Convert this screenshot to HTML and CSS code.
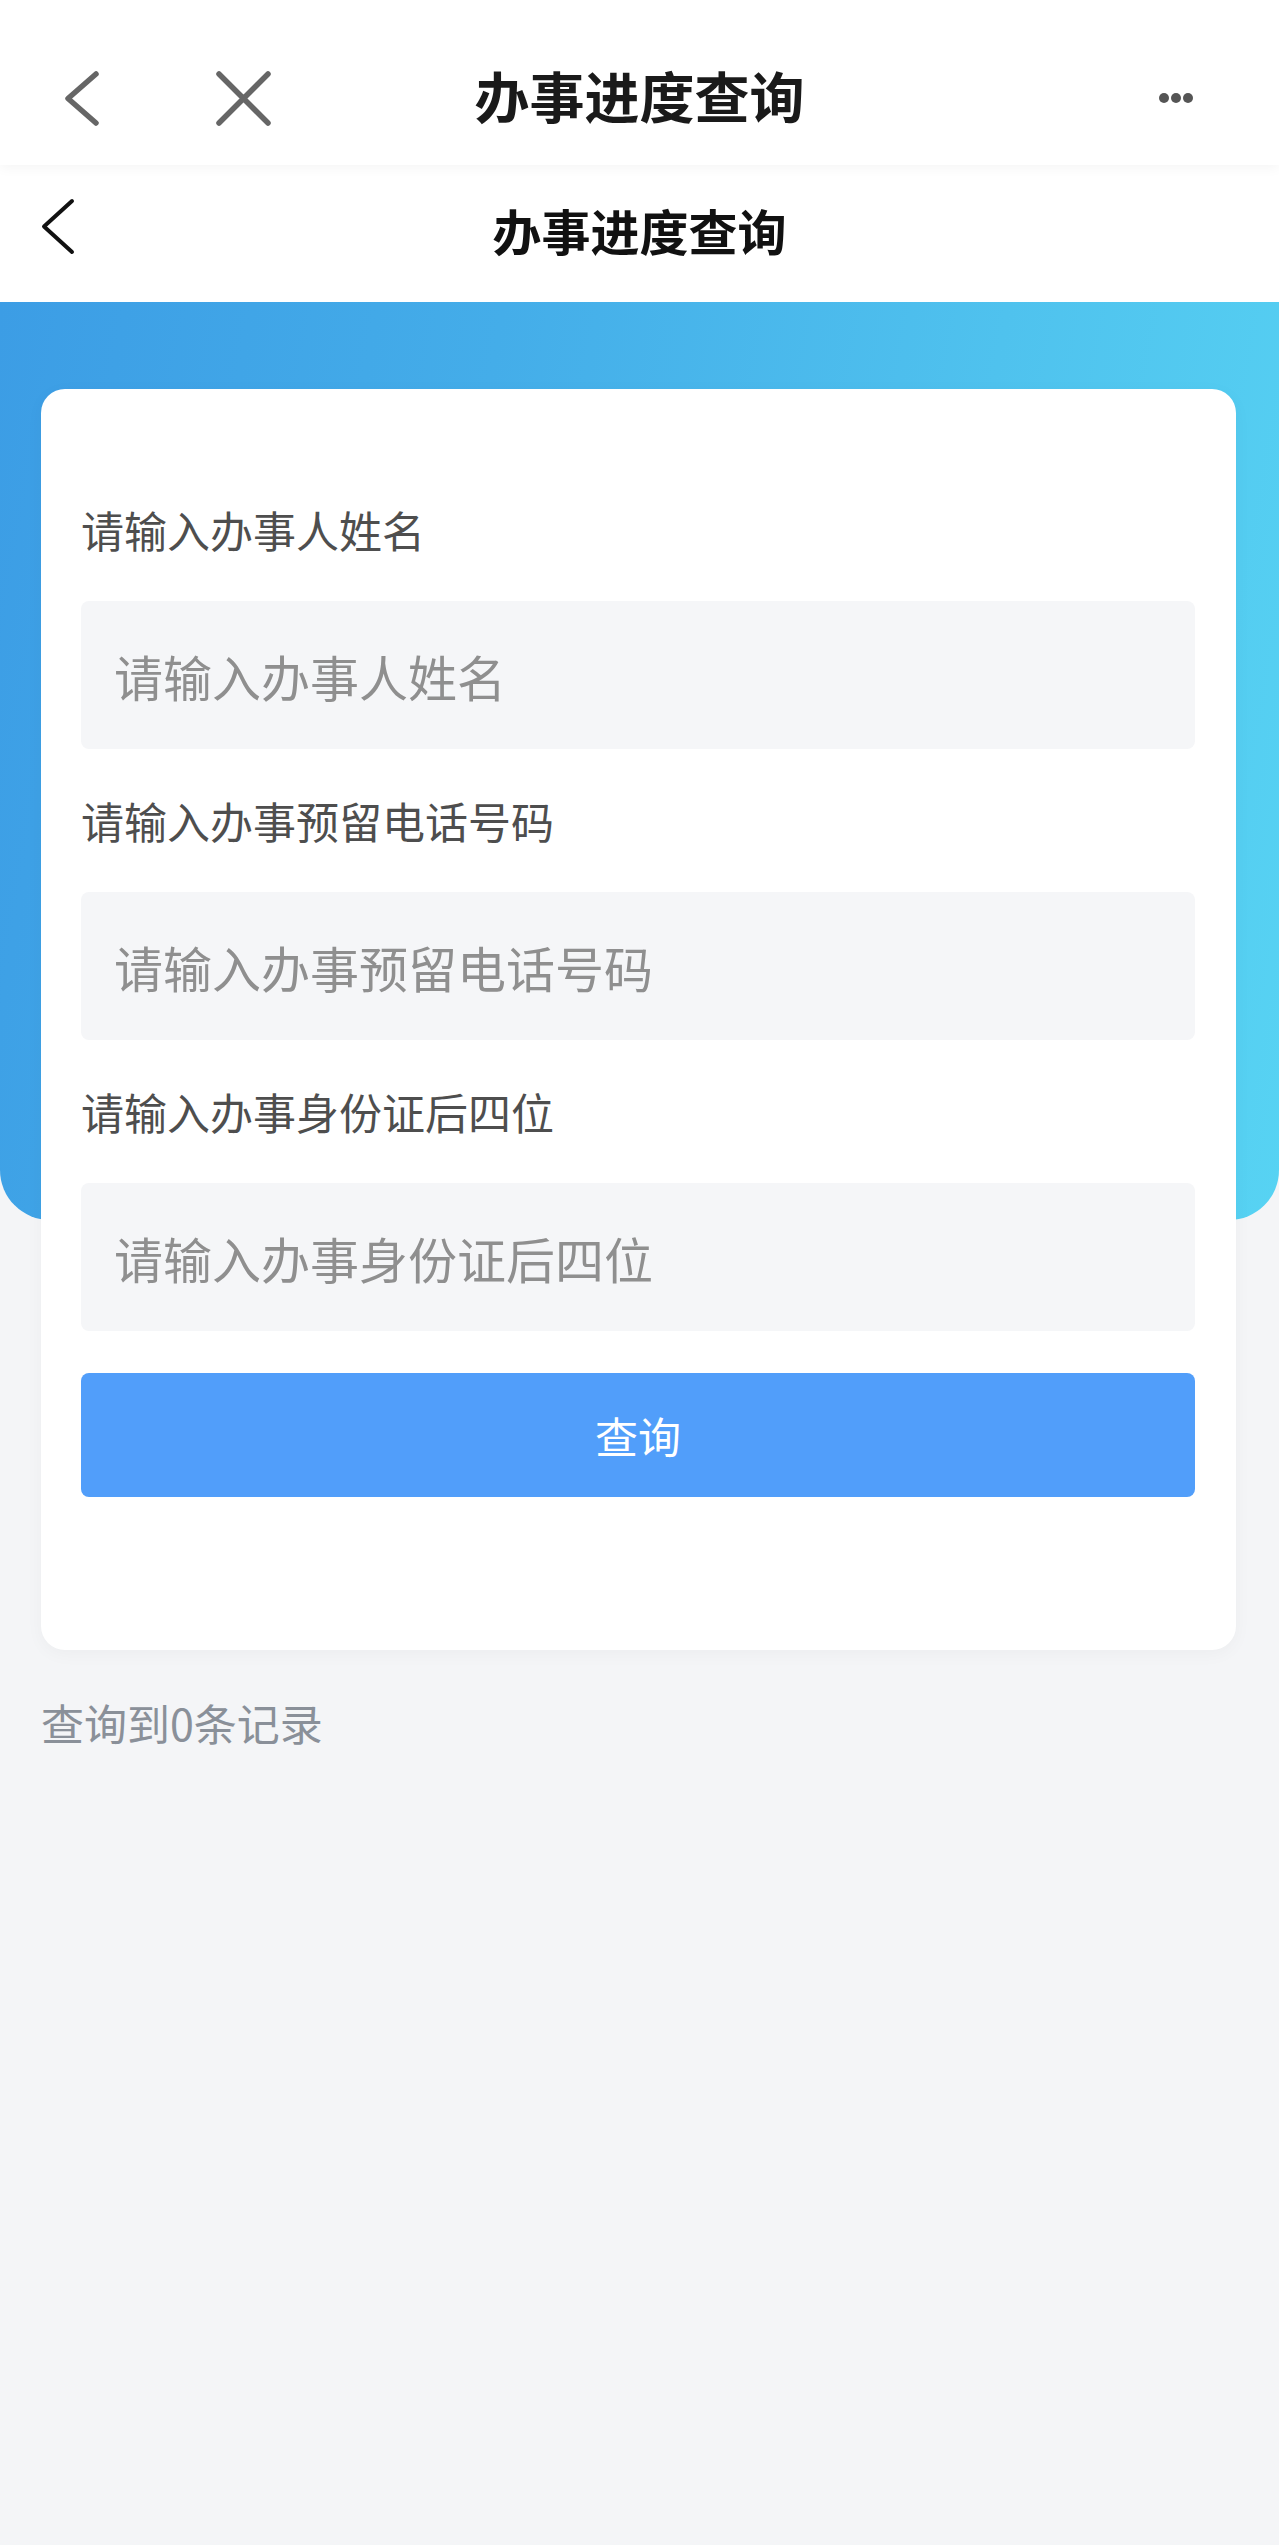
FILE: index.html
```html
<!DOCTYPE html>
<html lang="zh-CN">
<head>
<meta charset="utf-8">
<title>办事进度查询</title>
<link rel="stylesheet" href="styles.css">
</head>
<body>
<header class="topbar">
  <div class="topbar-left">
    <svg class="icon-back" width="40" height="60" viewBox="0 0 40 60"><polyline points="36,6 8,30.5 36,55" fill="none" stroke="#666" stroke-width="5.5" stroke-linecap="round" stroke-linejoin="round"/></svg>
    <svg class="icon-close" width="64" height="60" viewBox="0 0 64 60"><path d="M7 6 L56 55 M56 6 L7 55" fill="none" stroke="#666" stroke-width="5.5" stroke-linecap="round"/></svg>
  </div>
  <h1 class="topbar-title">办事进度查询</h1>
  <div class="topbar-right">
    <svg width="42" height="20" viewBox="0 0 42 20"><circle cx="9" cy="10" r="5" fill="#555"/><circle cx="21" cy="10" r="5" fill="#555"/><circle cx="33" cy="10" r="5" fill="#555"/></svg>
  </div>
</header>
<nav class="subheader">
  <div class="sub-left">
    <svg class="icon-subback" width="40" height="60" viewBox="0 0 40 60"><polyline points="34,4 6,29.5 34,55" fill="none" stroke="#111" stroke-width="4" stroke-linecap="round" stroke-linejoin="round"/></svg>
  </div>
  <h2 class="sub-title">办事进度查询</h2>
  <div class="sub-right"></div>
</nav>
<main class="main">
  <section class="card">
    <label class="field-label" for="f1">请输入办事人姓名</label>
    <input class="field-input" id="f1" type="text" placeholder="请输入办事人姓名">
    <label class="field-label" for="f2">请输入办事预留电话号码</label>
    <input class="field-input" id="f2" type="text" placeholder="请输入办事预留电话号码">
    <label class="field-label" for="f3">请输入办事身份证后四位</label>
    <input class="field-input" id="f3" type="text" placeholder="请输入办事身份证后四位">
    <button class="btn-query" type="button">查询</button>
  </section>
  <p class="result">查询到0条记录</p>
</main>
</body>
</html>
```

FILE: styles.css
```css
* { box-sizing: border-box; }
html, body { margin: 0; padding: 0; }
body {
  width: 1279px;
  min-height: 2545px;
  background: #f4f5f7;
  font-family: "Noto Sans CJK SC", "Noto Sans", "Liberation Sans", sans-serif;
  color: #333;
}
.topbar {
  position: relative;
  z-index: 3;
  height: 165px;
  padding-top: 30px;
  background: #fff;
  display: grid;
  grid-template-columns: 1fr auto 1fr;
  align-items: center;
  box-shadow: 0 3px 12px rgba(0, 0, 0, 0.045);
}
.topbar-left {
  display: flex;
  align-items: center;
  padding-left: 60px;
  gap: 112px;
}
.topbar-left svg, .topbar-right svg, .sub-left svg { display: block; }
.topbar-title {
  margin: 0 0 6px;
  font-size: 55px;
  font-weight: 700;
  color: #1a1a1a;
  line-height: 1;
}
.topbar-right {
  display: flex;
  justify-content: flex-end;
  padding-right: 82px;
}
.subheader {
  position: relative;
  z-index: 2;
  height: 137px;
  background: #fff;
  display: grid;
  grid-template-columns: 1fr auto 1fr;
  align-items: center;
}
.sub-left {
  padding-left: 38px;
  display: flex;
  align-items: center;
}
.icon-subback { margin-bottom: 14px; }
.sub-title {
  margin: 0 0 8px;
  font-size: 49px;
  font-weight: 700;
  color: #111;
  line-height: 1;
}
.main {
  position: relative;
  padding: 87px 43px 0 41px;
}
.main::before {
  content: "";
  position: absolute;
  left: 0;
  right: 0;
  top: 0;
  height: 918px;
  border-radius: 0 0 50px 50px;
  background: linear-gradient(100deg, #3c9de5 0%, #44ade9 35%, #4fc2ee 70%, #57d3f3 100%);
}
.card {
  position: relative;
  z-index: 1;
  background: #fff;
  border-radius: 24px;
  padding: 69px 41px 153px 40px;
  display: flex;
  flex-direction: column;
  box-shadow: 0 4px 18px rgba(0, 0, 0, 0.035);
}
.field-label {
  height: 143px;
  display: flex;
  align-items: center;
  font-size: 43px;
  color: #4e4e4e;
  line-height: 1;
}
.field-input {
  height: 148px;
  width: 100%;
  border: none;
  outline: none;
  border-radius: 8px;
  background: #f5f6f8;
  padding: 0 33px;
  font-family: inherit;
  font-size: 49px;
  color: #333;
}
.field-input::placeholder { color: #8f8f8f; }
.btn-query {
  margin-top: 42px;
  height: 124px;
  width: 100%;
  border: none;
  border-radius: 8px;
  background: #519efa;
  color: #fff;
  font-family: inherit;
  font-size: 43px;
  line-height: 1;
}
.result {
  margin: 42px 0 0;
  font-size: 43px;
  line-height: 60px;
  color: #8a9099;
}
```
